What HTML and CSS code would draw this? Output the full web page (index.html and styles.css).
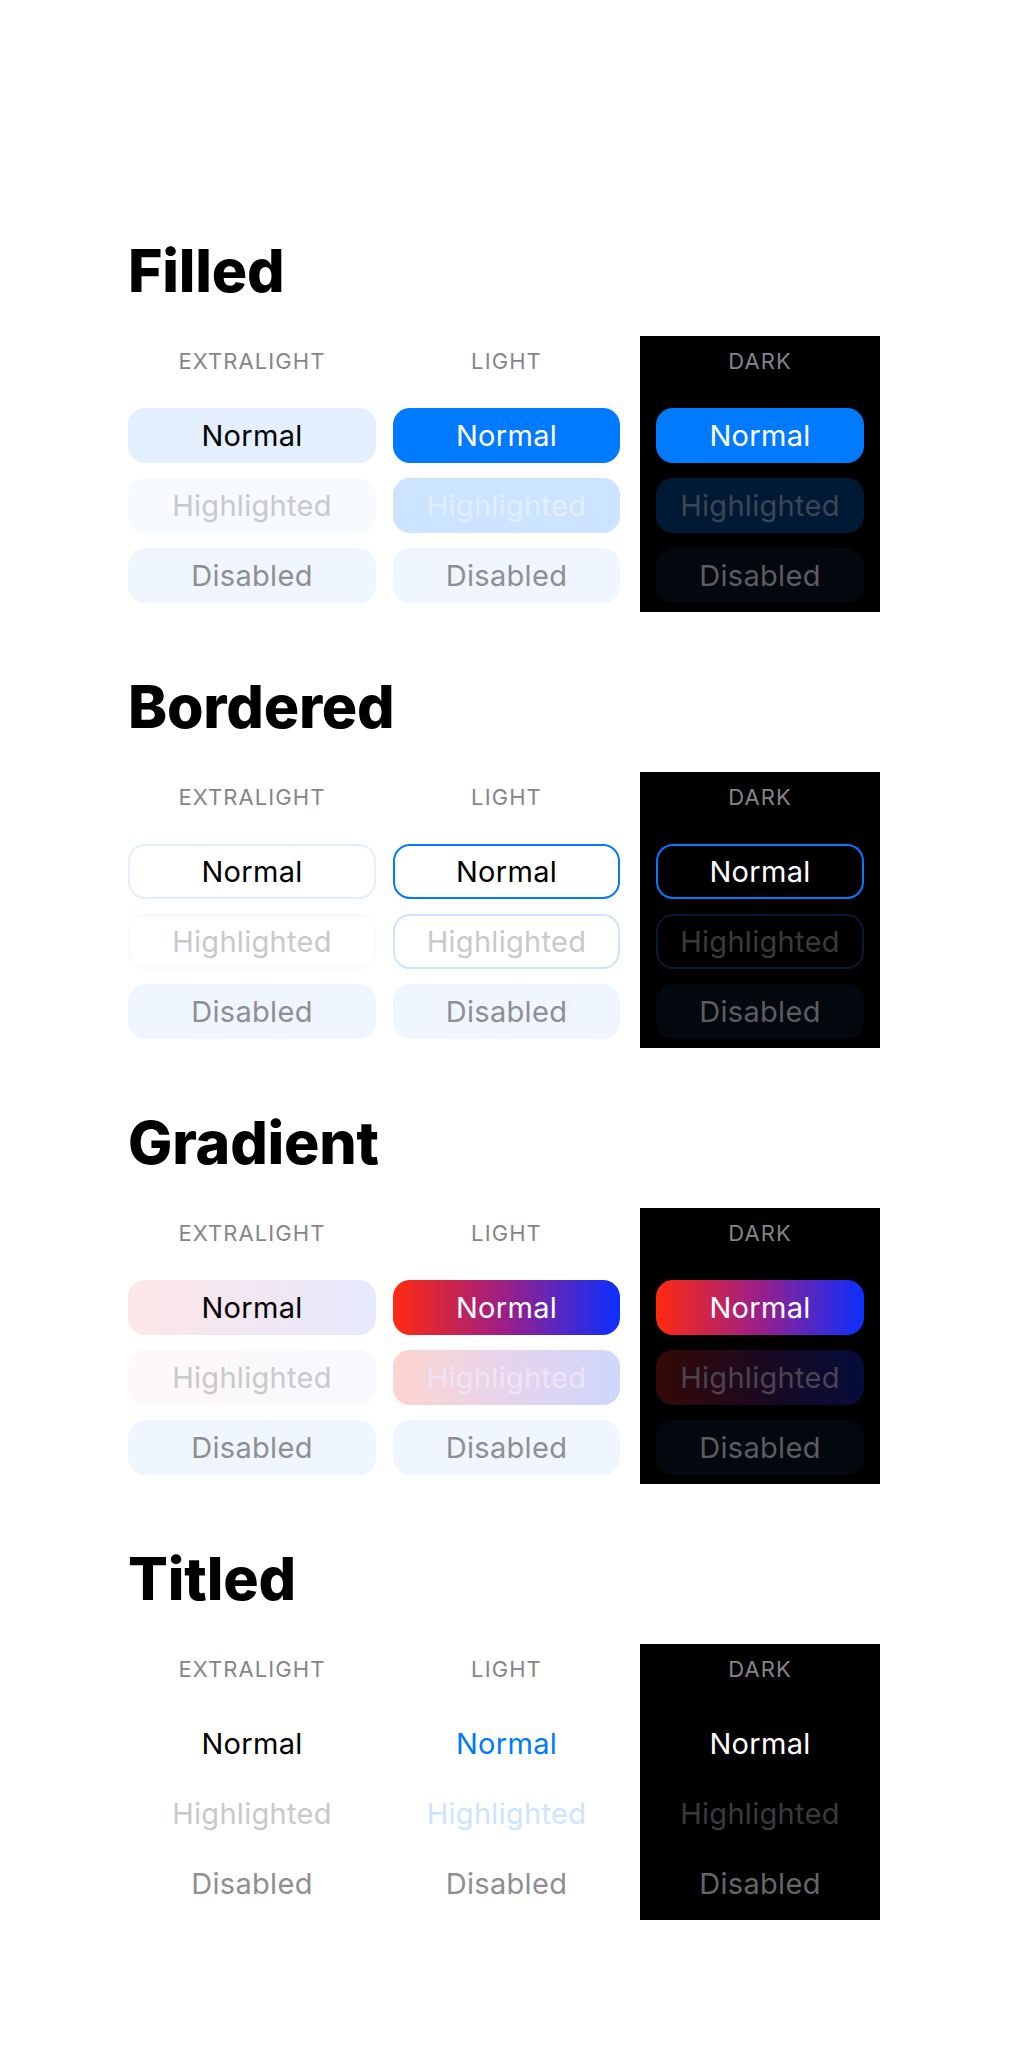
FILE: index.html
```html
<!DOCTYPE html>
<html lang="en">
<head>
<meta charset="utf-8">
<title>Buttons</title>
<link rel="stylesheet" href="styles.css">
</head>
<body>
<main class="page">

  <section class="section">
    <h2 class="heading">Filled</h2>
    <div class="cols">
      <div class="col col-xl">
        <div class="label">EXTRALIGHT</div>
        <div class="btn filled-xl-normal">Normal</div>
        <div class="btn filled-xl-hl">Highlighted</div>
        <div class="btn disabled-light">Disabled</div>
      </div>
      <div class="col col-l">
        <div class="label">LIGHT</div>
        <div class="btn filled-l-normal">Normal</div>
        <div class="btn filled-l-hl">Highlighted</div>
        <div class="btn disabled-light">Disabled</div>
      </div>
      <div class="col col-dark">
        <div class="label">DARK</div>
        <div class="btn filled-d-normal">Normal</div>
        <div class="btn filled-d-hl">Highlighted</div>
        <div class="btn disabled-dark">Disabled</div>
      </div>
    </div>
  </section>

  <section class="section">
    <h2 class="heading">Bordered</h2>
    <div class="cols">
      <div class="col col-xl">
        <div class="label">EXTRALIGHT</div>
        <div class="btn bord-xl-normal">Normal</div>
        <div class="btn bord-xl-hl">Highlighted</div>
        <div class="btn disabled-light">Disabled</div>
      </div>
      <div class="col col-l">
        <div class="label">LIGHT</div>
        <div class="btn bord-l-normal">Normal</div>
        <div class="btn bord-l-hl">Highlighted</div>
        <div class="btn disabled-light">Disabled</div>
      </div>
      <div class="col col-dark">
        <div class="label">DARK</div>
        <div class="btn bord-d-normal">Normal</div>
        <div class="btn bord-d-hl">Highlighted</div>
        <div class="btn disabled-dark">Disabled</div>
      </div>
    </div>
  </section>

  <section class="section">
    <h2 class="heading">Gradient</h2>
    <div class="cols">
      <div class="col col-xl">
        <div class="label">EXTRALIGHT</div>
        <div class="btn grad-xl-normal">Normal</div>
        <div class="btn grad-xl-hl">Highlighted</div>
        <div class="btn disabled-light">Disabled</div>
      </div>
      <div class="col col-l">
        <div class="label">LIGHT</div>
        <div class="btn grad-l-normal">Normal</div>
        <div class="btn grad-l-hl">Highlighted</div>
        <div class="btn disabled-light">Disabled</div>
      </div>
      <div class="col col-dark">
        <div class="label">DARK</div>
        <div class="btn grad-d-normal">Normal</div>
        <div class="btn grad-d-hl">Highlighted</div>
        <div class="btn disabled-dark">Disabled</div>
      </div>
    </div>
  </section>

  <section class="section">
    <h2 class="heading">Titled</h2>
    <div class="cols">
      <div class="col col-xl">
        <div class="label">EXTRALIGHT</div>
        <div class="btn title-xl-normal">Normal</div>
        <div class="btn title-xl-hl">Highlighted</div>
        <div class="btn title-disabled">Disabled</div>
      </div>
      <div class="col col-l">
        <div class="label">LIGHT</div>
        <div class="btn title-l-normal">Normal</div>
        <div class="btn title-l-hl">Highlighted</div>
        <div class="btn title-disabled">Disabled</div>
      </div>
      <div class="col col-dark">
        <div class="label">DARK</div>
        <div class="btn title-d-normal">Normal</div>
        <div class="btn title-d-hl">Highlighted</div>
        <div class="btn title-d-disabled">Disabled</div>
      </div>
    </div>
  </section>

</main>
</body>
</html>
```

FILE: styles.css
```css
* { box-sizing: border-box; }

html, body {
  margin: 0;
  padding: 0;
  background: #ffffff;
}

body {
  font-family: Inter, "Noto Sans", "Liberation Sans", sans-serif;
  color: #000;
}

.page {
  padding: 236px 0 0 128px;
  width: 1024px;
  min-height: 2048px;
}

.section {
  margin-bottom: 60px;
}

.heading {
  margin: 0 0 30px 0;
  font-size: 59px;
  line-height: 70px;
  font-weight: 800;
  letter-spacing: -0.2px;
  color: #000;
}

.cols {
  display: flex;
  align-items: stretch;
}

.col {
  display: flex;
  flex-direction: column;
  gap: 15px;
  padding: 12px 0 9px 0;
}

.col-xl { width: 248px; }
.col-l { width: 227px; margin-left: 17px; }
.col-dark {
  width: 240px;
  margin-left: 20px;
  padding-left: 16px;
  padding-right: 16px;
  background: #000;
}

.label {
  font-size: 22px;
  line-height: 26px;
  text-align: center;
  color: #858589;
  letter-spacing: 1.1px;
  margin-bottom: 19px;
}

.btn {
  height: 55px;
  border-radius: 17px;
  display: flex;
  align-items: center;
  justify-content: center;
  font-size: 29px;
  font-weight: 400;
  letter-spacing: 0.3px;
  line-height: 1;
  border: 2px solid transparent;
}

/* Shared disabled */
.disabled-light { background: #f0f6ff; color: #8e8e93; }
.disabled-dark { background: #03070e; color: #5c5c60; }

/* Filled */
.filled-xl-normal { background: #e4f0ff; color: #000; }
.filled-xl-hl { background: #f7faff; color: #c9c9cc; }
.filled-l-normal { background: #007aff; color: #fff; }
.filled-l-hl { background: #cce4ff; color: #e2efff; }
.filled-d-normal { background: #007aff; color: #fff; }
.filled-d-hl { background: #001a36; color: #3d4652; }

/* Bordered */
.bord-xl-normal { background: #fff; border-color: #e3efff; color: #000; }
.bord-xl-hl { background: #fff; border-color: #f6f9ff; color: #c9c9cc; }
.bord-l-normal { background: #fff; border-color: #007aff; color: #000; }
.bord-l-hl { background: #fff; border-color: #cce4ff; color: #c9c9cc; }
.bord-d-normal { background: #000; border-color: #007aff; color: #fff; }
.bord-d-hl { background: #000; border-color: #061a33; color: #3a3a3c; }

/* Gradient */
.grad-xl-normal { background: linear-gradient(90deg, #fde6e7, #e6e8fd); color: #000; border: 0; }
.grad-xl-hl { background: linear-gradient(90deg, #fef8f8, #f8f8fe); color: #c9c9cc; border: 0; }
.grad-l-normal { background: linear-gradient(90deg, #ff2a0e, #9a1f8a 50%, #0b2fff); color: #fff; border: 0; }
.grad-l-hl { background: linear-gradient(90deg, #fdd4cf, #e6d3ec 50%, #ced7fc); color: #eee4f4; border: 0; }
.grad-d-normal { background: linear-gradient(90deg, #ff2a0e, #9a1f8a 50%, #0b2fff); color: #fff; border: 0; }
.grad-d-hl { background: linear-gradient(90deg, #340a05, #1c0820 50%, #040d3a); color: #4a4550; border: 0; }

/* Titled */
.title-xl-normal { color: #000; }
.title-xl-hl { color: #c9c9cc; }
.title-l-normal { color: #007aff; }
.title-l-hl { color: #cce4ff; }
.title-disabled { color: #8e8e93; }
.title-d-normal { color: #fff; }
.title-d-hl { color: #3a3a3c; }
.title-d-disabled { color: #666669; }
```
